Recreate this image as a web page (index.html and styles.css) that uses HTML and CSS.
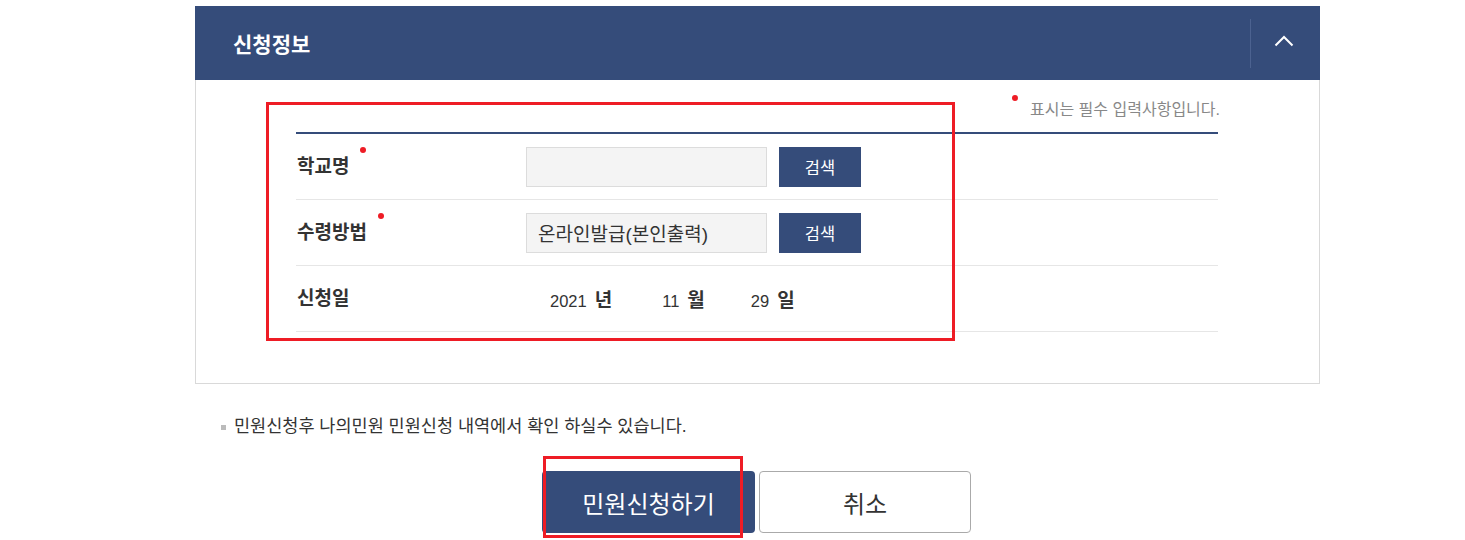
FILE: index.html
```html
<!DOCTYPE html>
<html lang="ko">
<head>
    <meta charset="UTF-8">
    <title>신청정보</title>
    <link rel="stylesheet" href="styles.css">
</head>
<body>
    <div class="wrap">
        <section class="panel">
            <header class="panel-head">
                <h2>신청정보</h2>
                <button class="toggle" type="button" aria-label="접기">
                    <svg width="20" height="12" viewBox="0 0 20 12"><path d="M1.5 10.5 L10 2 L18.5 10.5" fill="none" stroke="#fff" stroke-width="2"/></svg>
                </button>
            </header>
            <div class="panel-body">
                <p class="req-note"><span class="dot"></span>표시는 필수 입력사항입니다.</p>
                <div class="form-table">
                    <div class="row">
                        <div class="label">학교명<span class="dot"></span></div>
                        <div class="field">
                            <input type="text" class="text-input">
                            <button type="button" class="btn-search">검색</button>
                        </div>
                    </div>
                    <div class="row">
                        <div class="label">수령방법<span class="dot"></span></div>
                        <div class="field">
                            <input type="text" class="text-input" value="온라인발급(본인출력)" readonly>
                            <button type="button" class="btn-search">검색</button>
                        </div>
                    </div>
                    <div class="row">
                        <div class="label">신청일</div>
                        <div class="field date">
                            <span class="date-part"><span class="num">2021</span><b>년</b></span>
                            <span class="date-part"><span class="num">11</span><b>월</b></span>
                            <span class="date-part"><span class="num">29</span><b>일</b></span>
                        </div>
                    </div>
                </div>
            </div>
        </section>

        <p class="notice">민원신청후 나의민원 민원신청 내역에서 확인 하실수 있습니다.</p>

        <div class="actions">
            <button type="button" class="btn btn-primary">민원신청하기</button>
            <button type="button" class="btn btn-cancel">취소</button>
        </div>
    </div>

    <!-- annotation boxes drawn over the screenshot -->
    <div class="mark mark-form"></div>
    <div class="mark mark-submit"></div>
</body>
</html>
```

FILE: styles.css
```css
:root {
    --navy: #354c7a;
    --text: #333;
    --line: #e6e6e6;
    --red: #ee1c25;
}

* {
    margin: 0;
    padding: 0;
    box-sizing: border-box;
}

body {
    font-family: "Liberation Sans", "Noto Sans CJK KR", sans-serif;
    color: var(--text);
    background: #fff;
    position: relative;
    min-height: 540px;
}

.wrap {
    width: 1125px;
    margin-left: 195px;
    padding-top: 6px;
}

.panel-head {
    height: 74px;
    background: var(--navy);
    display: flex;
    align-items: center;
    justify-content: space-between;
}

.panel-head h2 {
    color: #fff;
    font-size: 21px;
    font-weight: bold;
    padding-left: 38px;
}

.toggle {
    width: 70px;
    height: 49px;
    background: none;
    border: none;
    border-left: 1px solid #4c6290;
    display: flex;
    align-items: center;
    justify-content: center;
    padding: 0 4px 4px 0;
}

.panel-body {
    border: 1px solid #d9d9d9;
    border-top: none;
    padding: 15px 101px 51px 100px;
}

.dot {
    display: inline-block;
    width: 6px;
    height: 6px;
    border-radius: 50%;
    background: var(--red);
}

.req-note {
    text-align: right;
    font-size: 16px;
    color: #888;
    line-height: 22px;
    margin-bottom: 11px;
    margin-right: -2px;
}

.req-note .dot {
    vertical-align: 14px;
    margin-right: 12px;
}

.form-table {
    border-top: 2px solid var(--navy);
}

.row {
    display: flex;
    align-items: center;
    height: 66px;
    border-bottom: 1px solid var(--line);
}

.label {
    width: 230px;
    padding-left: 1px;
    font-size: 19px;
    font-weight: bold;
    line-height: 28px;
}

.label .dot {
    vertical-align: top;
    position: relative;
    top: -6px;
    margin-left: 11px;
}

.field {
    display: flex;
    align-items: center;
    gap: 12px;
}

.text-input {
    width: 241px;
    height: 40px;
    background: #f4f4f4;
    border: 1px solid #dcdcdc;
    padding: 0 11px;
    font-family: inherit;
    font-size: 19px;
    color: var(--text);
    outline: none;
}

.btn-search {
    width: 82px;
    height: 40px;
    background: var(--navy);
    color: #fff;
    border: none;
    font-family: inherit;
    font-size: 16.5px;
}

.date {
    gap: 0;
    padding-left: 24px;
    font-size: 16.5px;
}

.date-part {
    display: inline-flex;
    align-items: baseline;
    gap: 8px;
    margin-right: 50px;
}

.date-part:nth-child(2) {
    margin-right: 46px;
}

.date-part b {
    font-size: 19px;
}

.notice {
    margin-top: 30px;
    padding-left: 39px;
    font-size: 17.5px;
    line-height: 24px;
    position: relative;
}

.notice::before {
    content: "";
    position: absolute;
    left: 26px;
    top: 11px;
    width: 5px;
    height: 5px;
    background: #bbb;
}

.actions {
    display: flex;
    justify-content: center;
    gap: 4px;
    margin-top: 33px;
    padding-right: 2px;
}

.btn {
    width: 213px;
    height: 62px;
    border-radius: 4px;
    font-family: inherit;
    font-size: 24px;
}

.btn-primary {
    background: var(--navy);
    color: #fff;
    border: none;
}

.btn-cancel {
    width: 212px;
    background: #fff;
    color: var(--text);
    border: 1px solid #aaa;
}

.mark {
    position: absolute;
    border: 3px solid var(--red);
    pointer-events: none;
}

.mark-form {
    left: 266px;
    top: 102px;
    width: 689px;
    height: 239px;
}

.mark-submit {
    left: 543px;
    top: 456px;
    width: 200px;
    height: 82px;
}
```
